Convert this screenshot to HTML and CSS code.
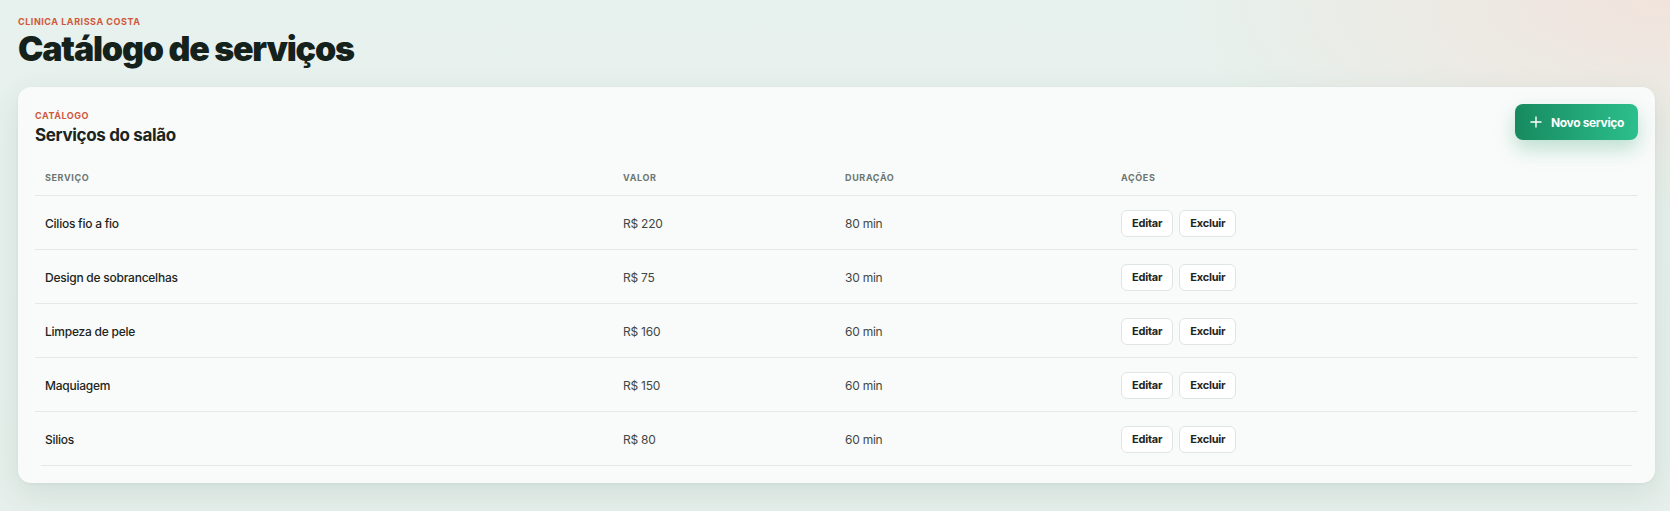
FILE: index.html
```html
<!DOCTYPE html>
<html lang="pt-BR">
<head>
  <meta charset="UTF-8" />
  <meta name="viewport" content="width=device-width, initial-scale=1.0" />
  <title>Catálogo de serviços</title>
  <link rel="stylesheet" href="styles.css">
</head>
<body>
  <header class="page-head">
    <div class="eyebrow">Clinica Larissa Costa</div>
    <h1>Catálogo de serviços</h1>
  </header>

  <section class="card">
    <div class="card-head">
      <div class="card-title">
        <div class="eyebrow">Catálogo</div>
        <h2>Serviços do salão</h2>
      </div>
      <button class="btn-primary">
        <svg width="12" height="12" viewBox="0 0 12 12" aria-hidden="true">
          <path d="M6 1v10M1 6h10" stroke="#fff" stroke-width="1.4" stroke-linecap="round" />
        </svg>
        Novo serviço
      </button>
    </div>

    <table class="services">
      <colgroup>
        <col class="col-name" />
        <col class="col-price" />
        <col class="col-time" />
        <col />
      </colgroup>
      <thead>
        <tr>
          <th>Serviço</th>
          <th>Valor</th>
          <th>Duração</th>
          <th>Ações</th>
        </tr>
      </thead>
      <tbody>
        <tr>
          <td class="name">Cilios fio a fio</td>
          <td>R$ 220</td>
          <td>80 min</td>
          <td><div class="actions"><button class="btn">Editar</button><button class="btn">Excluir</button></div></td>
        </tr>
        <tr>
          <td class="name">Design de sobrancelhas</td>
          <td>R$ 75</td>
          <td>30 min</td>
          <td><div class="actions"><button class="btn">Editar</button><button class="btn">Excluir</button></div></td>
        </tr>
        <tr>
          <td class="name">Limpeza de pele</td>
          <td>R$ 160</td>
          <td>60 min</td>
          <td><div class="actions"><button class="btn">Editar</button><button class="btn">Excluir</button></div></td>
        </tr>
        <tr>
          <td class="name">Maquiagem</td>
          <td>R$ 150</td>
          <td>60 min</td>
          <td><div class="actions"><button class="btn">Editar</button><button class="btn">Excluir</button></div></td>
        </tr>
        <tr>
          <td class="name">Silios</td>
          <td>R$ 80</td>
          <td>60 min</td>
          <td><div class="actions"><button class="btn">Editar</button><button class="btn">Excluir</button></div></td>
        </tr>
      </tbody>
    </table>
    <div class="table-end"></div>
  </section>
</body>
</html>
```

FILE: styles.css
```css
* {
  box-sizing: border-box;
}

html {
  min-height: 100%;
  background:
    radial-gradient(ellipse 700px 300px at 100% 0%, rgba(242, 226, 218, 0.9), rgba(242, 226, 218, 0) 70%),
    linear-gradient(180deg, #e7f1ed 0%, #e6efeb 100%);
}

body {
  margin: 0;
  padding: 16px 15px 28px 18px;
  font-family: Inter, "Open Sans", sans-serif;
  color: #1b2420;
}

.eyebrow {
  font-size: 9px;
  line-height: 12px;
  font-weight: 700;
  letter-spacing: 0.06em;
  text-transform: uppercase;
  color: #d0583b;
}

h1 {
  margin: 1px 0 0;
  font-size: 34px;
  line-height: 40px;
  font-weight: 900;
  letter-spacing: -0.035em;
  color: #15211b;
}

.card {
  margin-top: 18px;
  padding: 17px;
  background: #f9fbfa;
  border-radius: 13px;
  box-shadow: 0 10px 30px rgba(60, 100, 85, 0.12), 0 1px 3px rgba(60, 100, 85, 0.06);
}

.card-head {
  display: flex;
  justify-content: space-between;
  align-items: flex-start;
}

.card-title {
  padding-top: 6px;
}

h2 {
  margin: 2px 0 0;
  font-size: 17px;
  line-height: 22px;
  font-weight: 700;
  letter-spacing: -0.02em;
  color: #1b2420;
}

.btn-primary {
  display: flex;
  align-items: center;
  gap: 9px;
  height: 36px;
  padding: 0 14px 0 15px;
  border: none;
  border-radius: 8px;
  background: linear-gradient(90deg, #178a5f 0%, #2cbf8d 100%);
  color: #fff;
  font-family: inherit;
  font-size: 12px;
  font-weight: 700;
  letter-spacing: -0.03em;
  box-shadow: 0 9px 20px rgba(34, 150, 105, 0.28);
  cursor: pointer;
}

.services {
  width: 100%;
  margin-top: 15px;
  border-collapse: collapse;
  table-layout: fixed;
}

.col-name {
  width: 578px;
}

.col-price {
  width: 222px;
}

.col-time {
  width: 276px;
}

.services th {
  height: 34px;
  padding: 0 10px;
  text-align: left;
  font-size: 9px;
  font-weight: 700;
  letter-spacing: 0.07em;
  text-transform: uppercase;
  color: #6b7571;
  border-bottom: 1px solid #e3e9e6;
}

.services td {
  height: 54px;
  padding: 2px 10px 0;
  font-size: 12px;
  letter-spacing: -0.02em;
  color: #3f4744;
  border-bottom: 1px solid #e3e9e6;
}

.services tr:last-child td {
  border-bottom: none;
}

.services td.name {
  font-weight: 500;
  color: #1d2522;
}

.table-end {
  height: 1px;
  margin: 0 6px;
  background: #e3e9e6;
}

.actions {
  display: flex;
  gap: 6px;
}

.btn {
  height: 27px;
  padding: 0 10px;
  border: 1px solid #dfe5e2;
  border-radius: 6px;
  background: #fff;
  color: #1d2522;
  font-family: inherit;
  font-size: 11px;
  font-weight: 700;
  letter-spacing: -0.02em;
  cursor: pointer;
}
```
